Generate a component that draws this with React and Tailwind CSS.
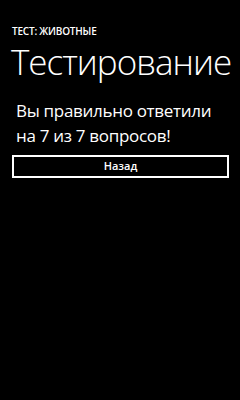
import React from 'react';

const App = () => {
  return (
    <div className="w-[240px] h-[400px] bg-black text-white overflow-hidden" style={{ fontFamily: '"Open Sans", "Noto Sans", sans-serif' }}>
      <div className="pl-[12px] pt-[25px]">
        <p className="text-[10px] leading-[12px] font-semibold uppercase tracking-[-0.2px] whitespace-nowrap">Тест: животные</p>
        <h1 className="mt-[3px] text-[35px] leading-[44px] font-light -ml-[1px] tracking-[-1px] whitespace-nowrap">Тестирование</h1>
      </div>
      <div className="px-[12px] pt-[14px]">
        <p className="text-[17px] leading-[25px] pl-[4px] tracking-[-0.3px] whitespace-nowrap">
          Вы правильно ответили
          <br />
          на 7 из 7 вопросов!
        </p>
        <button className="mt-[7px] w-[217px] h-[23px] border-2 border-white flex items-center justify-center text-[11px] font-semibold">
          Назад
        </button>
      </div>
    </div>
  );
};

export default App;
